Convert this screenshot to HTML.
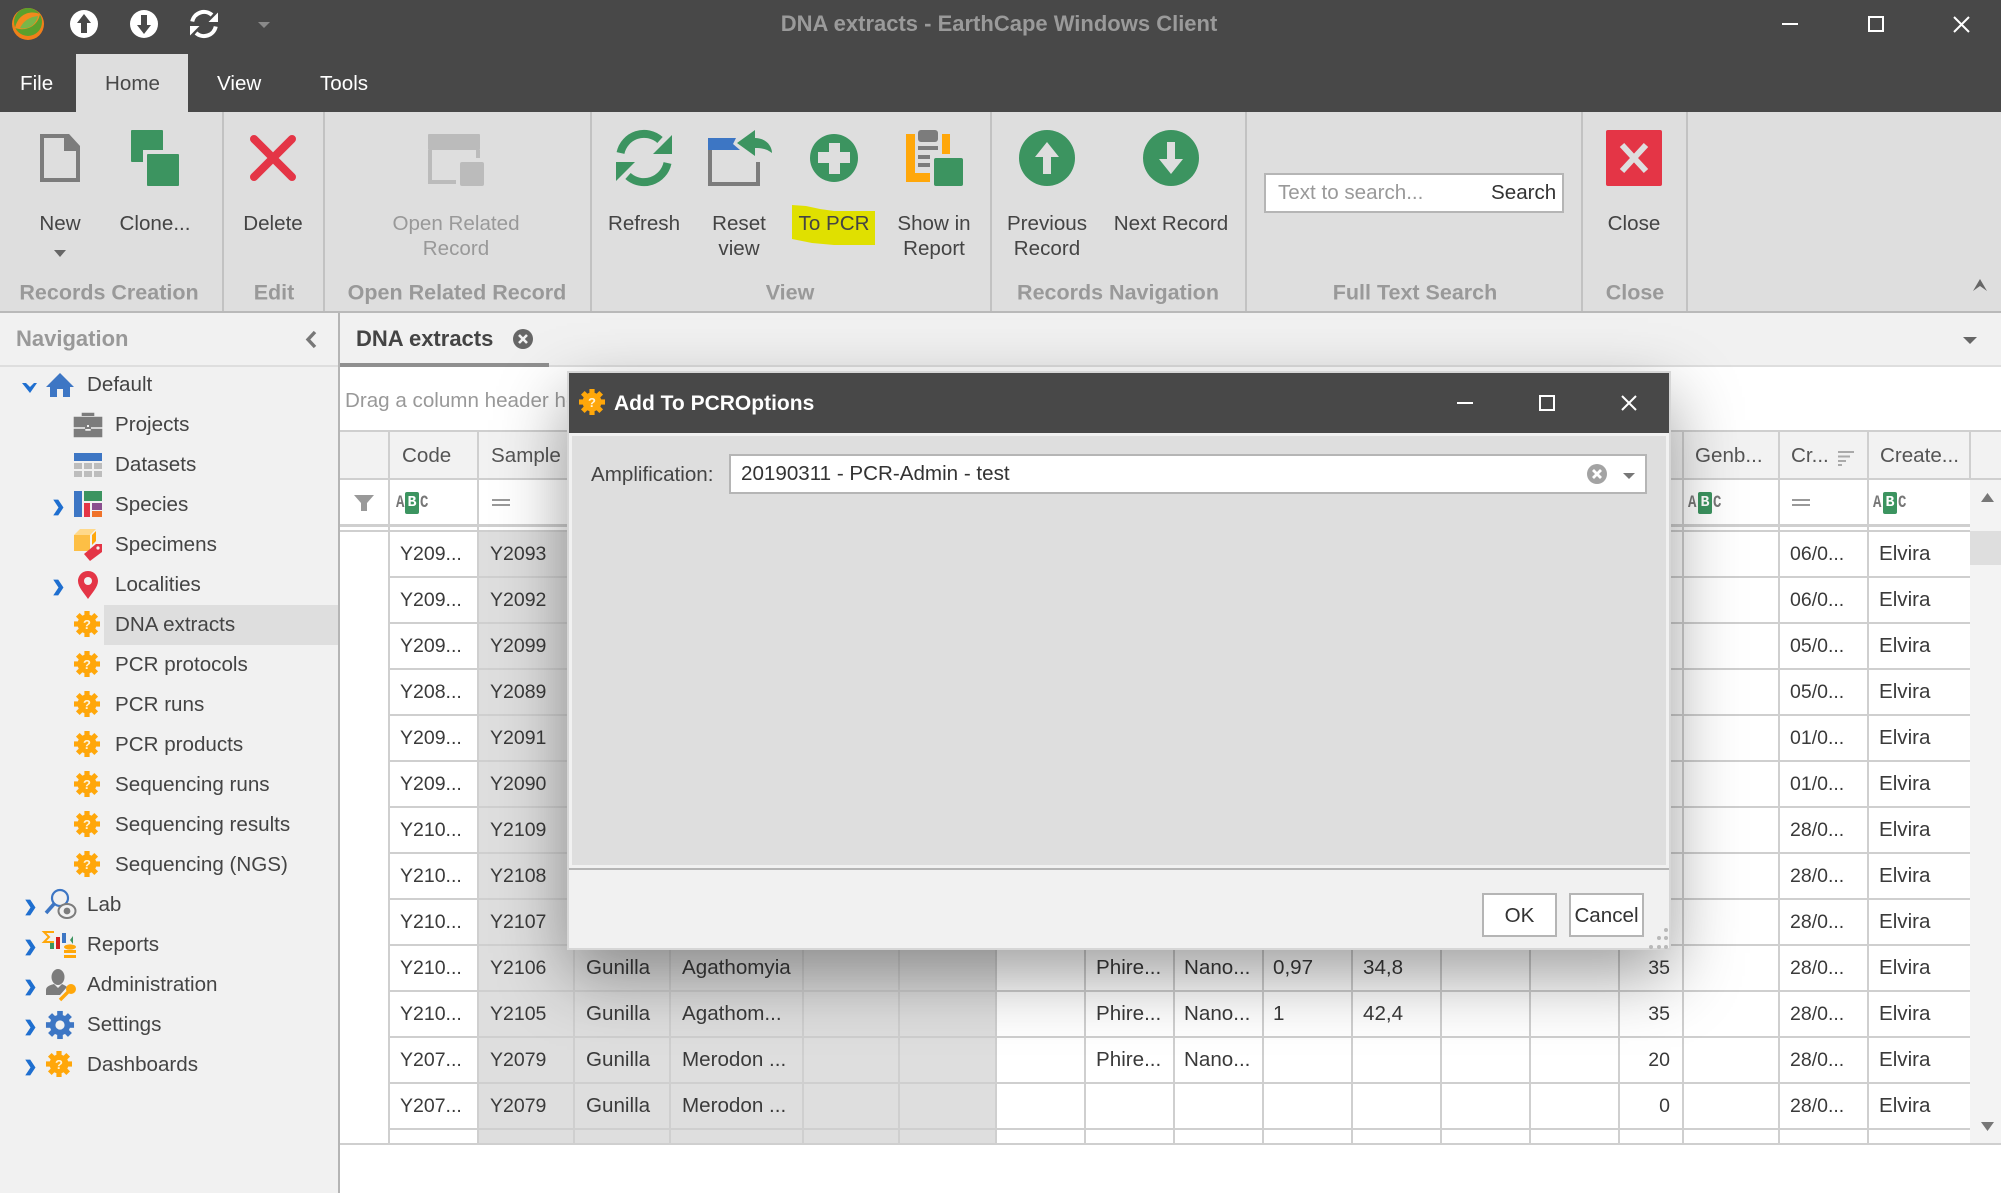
<!DOCTYPE html>
<html><head><meta charset="utf-8"><title>DNA extracts - EarthCape Windows Client</title>
<style>
html,body{margin:0;padding:0;background:#fff}
#p{position:relative;width:2001px;height:1193px;overflow:hidden;background:#fff;font:20.6px "Liberation Sans",sans-serif;color:#444}
#p div,#p span{position:absolute;white-space:nowrap}
.b{left:0;top:0}
.t{transform:translateY(calc(-50% + 1px))}
.c{transform:translate(-50%,calc(-50% + 1px));text-align:center}
.rb{color:#444}
.g{font-weight:bold;color:#999;font-size:21.5px;top:292px}
.sep{top:112px;height:199px;width:2px;background:#c2c2c2}
.v{top:432px;height:711px;width:2px;background:#cfcfcf}
.r{left:0;width:1970px;height:44px;line-height:44px}
.r span{color:#3a3a3a}
.a{left:400px;font-size:19.5px}.d2{left:490px;font-size:19.5px}.e2{left:586px}.f2{left:682px}
.k{left:1096px}.l{left:1184px}.m{left:1273px}.o{left:1363px}
.n{right:300px;font-size:19.5px}.q{left:1790px;font-size:19.5px}.s{left:1879px}
.abc{font:bold 14px "Liberation Mono",monospace;color:#777;top:492px;height:22px;line-height:22px;transform:scaleY(1.25)}
.abg{background:#3c9460;color:#fff;width:14px;height:22px;border-radius:2px;text-align:center;transform:none;font-size:15px}
.nv{color:#444}
svg{position:absolute;left:0;top:0}
</style></head><body><div id="p">

<!-- top dark band -->
<div class="b" style="width:2001px;height:112px;background:#484848"></div>
<div style="left:76px;top:54px;width:112px;height:58px;background:#dedede"></div>
<div class="t" style="left:999px;top:24px;transform:translate(-50%,-50%);font-weight:bold;font-size:22px;color:#9a9a9a">DNA extracts - EarthCape Windows Client</div>
<div class="t" style="left:20px;top:83px;color:#fff">File</div>
<div class="t" style="left:105px;top:83px;color:#484848">Home</div>
<div class="t" style="left:217px;top:83px;color:#fff">View</div>
<div class="t" style="left:320px;top:83px;color:#fff">Tools</div>

<!-- ribbon -->
<div style="left:0;top:112px;width:2001px;height:199px;background:#dedede"></div>
<div style="left:0;top:311px;width:2001px;height:2px;background:#b9b9b9"></div>
<div class="sep" style="left:222px"></div><div class="sep" style="left:323px"></div><div class="sep" style="left:590px"></div><div class="sep" style="left:990px"></div><div class="sep" style="left:1245px"></div><div class="sep" style="left:1581px"></div><div class="sep" style="left:1686px"></div>
<div style="left:792px;top:205px;width:83px;height:40px;background:#e0e000;clip-path:polygon(0 0,14px 1px,28px 4px,42px 6px,83px 6px,83px 40px,42px 40px,20px 38px,10px 36px,0 34px)"></div>

<div class="c rb" style="left:60px;top:223px">New</div>
<div class="c rb" style="left:155px;top:223px">Clone...</div>
<div class="c rb" style="left:273px;top:223px">Delete</div>
<div class="c" style="left:456px;top:235px;color:#999;line-height:25px;white-space:normal">Open Related<br>Record</div>
<div class="c rb" style="left:644px;top:223px">Refresh</div>
<div class="c rb" style="left:739px;top:235px;line-height:25px">Reset<br>view</div>
<div class="c rb" style="left:834px;top:223px">To PCR</div>
<div class="c rb" style="left:934px;top:235px;line-height:25px">Show in<br>Report</div>
<div class="c rb" style="left:1047px;top:235px;line-height:25px">Previous<br>Record</div>
<div class="c rb" style="left:1171px;top:223px">Next Record</div>
<div class="c rb" style="left:1634px;top:223px">Close</div>

<div class="c g" style="left:109px">Records Creation</div>
<div class="c g" style="left:274px">Edit</div>
<div class="c g" style="left:457px">Open Related Record</div>
<div class="c g" style="left:790px">View</div>
<div class="c g" style="left:1118px">Records Navigation</div>
<div class="c g" style="left:1415px">Full Text Search</div>
<div class="c g" style="left:1635px">Close</div>

<div style="left:1264px;top:173px;width:296px;height:36px;background:#fff;border:2px solid #b5b5b5"></div>
<div class="t" style="left:1278px;top:192px;color:#999">Text to search...</div>
<div class="t" style="left:1491px;top:192px;color:#333">Search</div>

<!-- navigation -->
<div style="left:0;top:313px;width:338px;height:880px;background:#f1f1f1"></div>
<div style="left:338px;top:313px;width:2px;height:880px;background:#b5b5b5"></div>
<div style="left:0;top:365px;width:338px;height:2px;background:#dedede"></div>
<div class="t" style="left:16px;top:338px;font-weight:bold;font-size:22px;color:#999">Navigation</div>
<div style="left:104px;top:605px;width:234px;height:40px;background:#dedede"></div>
<div class="t nv" style="left:87px;top:384px">Default</div>
<div class="t nv" style="left:115px;top:424px">Projects</div>
<div class="t nv" style="left:115px;top:464px">Datasets</div>
<div class="t nv" style="left:115px;top:504px">Species</div>
<div class="t nv" style="left:115px;top:544px">Specimens</div>
<div class="t nv" style="left:115px;top:584px">Localities</div>
<div class="t nv" style="left:115px;top:624px">DNA extracts</div>
<div class="t nv" style="left:115px;top:664px">PCR protocols</div>
<div class="t nv" style="left:115px;top:704px">PCR runs</div>
<div class="t nv" style="left:115px;top:744px">PCR products</div>
<div class="t nv" style="left:115px;top:784px">Sequencing runs</div>
<div class="t nv" style="left:115px;top:824px">Sequencing results</div>
<div class="t nv" style="left:115px;top:864px">Sequencing (NGS)</div>
<div class="t nv" style="left:87px;top:904px">Lab</div>
<div class="t nv" style="left:87px;top:944px">Reports</div>
<div class="t nv" style="left:87px;top:984px">Administration</div>
<div class="t nv" style="left:87px;top:1024px">Settings</div>
<div class="t nv" style="left:87px;top:1064px">Dashboards</div>

<!-- tab strip -->
<div style="left:340px;top:313px;width:1661px;height:52px;background:#f1f1f1"></div>
<div style="left:340px;top:365px;width:1661px;height:2px;background:#dedede"></div>
<div style="left:340px;top:363px;width:209px;height:4px;background:#8f8f8f"></div>
<div class="t" style="left:356px;top:338px;font-weight:bold;font-size:22px;color:#444">DNA extracts</div>
<div class="t" style="left:345px;top:400px;color:#999">Drag a column header here to group by that column</div>

<!-- grid -->
<div style="left:340px;top:430px;width:1661px;height:2px;background:#cfcfcf"></div>
<div style="left:340px;top:432px;width:1661px;height:46px;background:#f2f2f2"></div>
<div style="left:340px;top:478px;width:1661px;height:2px;background:#cfcfcf"></div>
<div style="left:340px;top:524px;width:1630px;height:3px;background:#cfcfcf"></div>
<div style="left:340px;top:530px;width:1630px;height:2px;background:#cfcfcf"></div>
<div style="left:477px;top:532px;width:519px;height:611px;background:#dedede"></div>
<div style="left:388px;top:532px;width:1582px;height:611px;background:repeating-linear-gradient(to bottom,transparent 0,transparent 44px,#cfcfcf 44px,#cfcfcf 46px)"></div>
<div style="left:1970px;top:480px;width:31px;height:663px;background:#f3f3f3"></div>
<div style="left:1970px;top:531px;width:31px;height:34px;background:#dedede"></div>
<div style="left:340px;top:1143px;width:1661px;height:2px;background:#cfcfcf"></div>

<div class="v" style="left:388px"></div><div class="v" style="left:477px"></div><div class="v" style="left:573px"></div><div class="v" style="left:669px"></div><div class="v" style="left:802px"></div><div class="v" style="left:898px"></div><div class="v" style="left:995px"></div><div class="v" style="left:1084px"></div><div class="v" style="left:1173px"></div><div class="v" style="left:1262px"></div><div class="v" style="left:1351px"></div><div class="v" style="left:1440px"></div><div class="v" style="left:1529px"></div><div class="v" style="left:1618px"></div><div class="v" style="left:1682px"></div><div class="v" style="left:1778px"></div><div class="v" style="left:1867px"></div>
<div style="left:1969px;top:432px;width:2px;height:48px;background:#cfcfcf"></div>

<div class="t" style="left:402px;top:455px;color:#555">Code</div>
<div class="t" style="left:491px;top:455px;color:#555">Sample</div>
<div class="t" style="left:1695px;top:455px;color:#555">Genb...</div>
<div class="t" style="left:1791px;top:455px;color:#555">Cr...</div>
<div class="t" style="left:1880px;top:455px;color:#555">Create...</div>

<span class="abc" style="left:396px">A</span><span class="abc abg" style="left:405px">B</span><span class="abc" style="left:420px">C</span>
<span class="abc" style="left:1688px">A</span><span class="abc abg" style="left:1698px">B</span><span class="abc" style="left:1713px">C</span>
<span class="abc" style="left:1873px">A</span><span class="abc abg" style="left:1883px">B</span><span class="abc" style="left:1898px">C</span>
<div style="left:492px;top:499px;width:18px;height:2px;background:#999"></div><div style="left:492px;top:504px;width:18px;height:2px;background:#999"></div>
<div style="left:1792px;top:499px;width:18px;height:2px;background:#999"></div><div style="left:1792px;top:504px;width:18px;height:2px;background:#999"></div>

<div class="r" style="top:532px"><span class="a">Y209...</span><span class="d2">Y2093</span><span class="n">0</span><span class="q">06/0...</span><span class="s">Elvira</span></div>
<div class="r" style="top:578px"><span class="a">Y209...</span><span class="d2">Y2092</span><span class="n">0</span><span class="q">06/0...</span><span class="s">Elvira</span></div>
<div class="r" style="top:624px"><span class="a">Y209...</span><span class="d2">Y2099</span><span class="n">0</span><span class="q">05/0...</span><span class="s">Elvira</span></div>
<div class="r" style="top:670px"><span class="a">Y208...</span><span class="d2">Y2089</span><span class="n">0</span><span class="q">05/0...</span><span class="s">Elvira</span></div>
<div class="r" style="top:716px"><span class="a">Y209...</span><span class="d2">Y2091</span><span class="n">0</span><span class="q">01/0...</span><span class="s">Elvira</span></div>
<div class="r" style="top:762px"><span class="a">Y209...</span><span class="d2">Y2090</span><span class="n">0</span><span class="q">01/0...</span><span class="s">Elvira</span></div>
<div class="r" style="top:808px"><span class="a">Y210...</span><span class="d2">Y2109</span><span class="n">0</span><span class="q">28/0...</span><span class="s">Elvira</span></div>
<div class="r" style="top:854px"><span class="a">Y210...</span><span class="d2">Y2108</span><span class="n">0</span><span class="q">28/0...</span><span class="s">Elvira</span></div>
<div class="r" style="top:900px"><span class="a">Y210...</span><span class="d2">Y2107</span><span class="n">35</span><span class="q">28/0...</span><span class="s">Elvira</span></div>
<div class="r" style="top:946px"><span class="a">Y210...</span><span class="d2">Y2106</span><span class="e2">Gunilla</span><span class="f2">Agathomyia</span><span class="k">Phire...</span><span class="l">Nano...</span><span class="m">0,97</span><span class="o">34,8</span><span class="n">35</span><span class="q">28/0...</span><span class="s">Elvira</span></div>
<div class="r" style="top:992px"><span class="a">Y210...</span><span class="d2">Y2105</span><span class="e2">Gunilla</span><span class="f2">Agathom...</span><span class="k">Phire...</span><span class="l">Nano...</span><span class="m">1</span><span class="o">42,4</span><span class="n">35</span><span class="q">28/0...</span><span class="s">Elvira</span></div>
<div class="r" style="top:1038px"><span class="a">Y207...</span><span class="d2">Y2079</span><span class="e2">Gunilla</span><span class="f2">Merodon ...</span><span class="k">Phire...</span><span class="l">Nano...</span><span class="n">20</span><span class="q">28/0...</span><span class="s">Elvira</span></div>
<div class="r" style="top:1084px"><span class="a">Y207...</span><span class="d2">Y2079</span><span class="e2">Gunilla</span><span class="f2">Merodon ...</span><span class="n">0</span><span class="q">28/0...</span><span class="s">Elvira</span></div>

<!-- base icons -->
<svg width="2001" height="1193" viewBox="0 0 2001 1193">
<defs>
<g id="gear"><circle r="9.5"/><g id="tt"><rect x="-2.6" y="-13" width="5.2" height="26"/><rect x="-2.6" y="-13" width="5.2" height="26" transform="rotate(45)"/><rect x="-2.6" y="-13" width="5.2" height="26" transform="rotate(90)"/><rect x="-2.6" y="-13" width="5.2" height="26" transform="rotate(135)"/></g></g>
<g id="og"><use href="#gear" fill="#ffa70a"/><text x="0" y="5" font-family="Liberation Sans" font-weight="bold" font-size="13" text-anchor="middle" fill="#fff3d8">?</text></g>
<path id="cr" d="M0 0 H4 L9 7.5 L4 15 H0 L5 7.5 Z" fill="#1f6fd0" stroke="#1f6fd0" stroke-width=".8"/>
<g id="ref"><path d="M-23.5 -5 A24 24 0 0 1 16 -18" fill="none" stroke-width="8"/><path d="M28 -23 V-4 H9 Z" stroke="none"/><path d="M23.5 5 A24 24 0 0 1 -16 18" fill="none" stroke-width="8"/><path d="M-28 23 V4 H-9 Z" stroke="none"/></g>
</defs>

<!-- title bar icons -->
<circle cx="28" cy="24" r="16" fill="#f07f1a"/><circle cx="28" cy="22" r="14" fill="#5aa02c"/>
<path d="M15 28 C18 14 30 10 40 14 C38 26 26 32 15 28 Z" fill="#f28a1e"/><path d="M20 28 C24 20 30 17 38 16 C36 25 28 30 20 28 Z" fill="#7ab648"/>
<circle cx="84" cy="24" r="14" fill="#fff"/><path d="M84 14 L91 23 H87 V33 H81 V23 H77 Z" fill="#484848"/>
<circle cx="144" cy="24" r="14" fill="#fff"/><path d="M144 34 L137 25 H141 V15 H147 V25 H151 Z" fill="#484848"/>
<use href="#ref" transform="translate(204 24) scale(.5)" fill="#fff" stroke="#fff"/>
<path d="M258 22 H270 L264 28 Z" fill="#8a8a8a"/>
<path d="M1782 24 H1798" stroke="#fff" stroke-width="2"/>
<rect x="1869" y="17" width="14" height="14" fill="none" stroke="#fff" stroke-width="2"/>
<path d="M1954 17 L1969 32 M1969 17 L1954 32" stroke="#fff" stroke-width="2"/>

<!-- ribbon icons -->
<path d="M42 136 H68 L78 147 V180 H42 Z" fill="none" stroke="#7c7c7c" stroke-width="4"/><path d="M64 134 H69 L80 146 V151 H64 Z" fill="#7c7c7c"/>
<path d="M54 250 H66 L60 257 Z" fill="#666"/>
<rect x="131" y="130" width="32" height="32" rx="1" fill="#3c9460"/><rect x="143" y="150" width="36" height="36" fill="#dedede"/><rect x="147" y="154" width="32" height="32" rx="1" fill="#3c9460"/>
<path d="M254 139 L292 177 M292 139 L254 177" stroke="#e43546" stroke-width="8" stroke-linecap="round"/>
<rect x="428" y="134" width="52" height="16" rx="1" fill="#bbb"/><path d="M430 150 V182 H456 M478 150 V158" fill="none" stroke="#bbb" stroke-width="4"/><rect x="460" y="162" width="24" height="24" rx="2" fill="#bbb"/>
<use href="#ref" transform="translate(644 158)" fill="#3c9460" stroke="#3c9460"/>
<path d="M710 150 V184 H758 V162" fill="none" stroke="#7c7c7c" stroke-width="4"/><path d="M708 138 H736 L733 144 L740 150 H708 Z" fill="#3d76c4"/>
<path d="M737 143 L755 130 V138 C766 138 772 146 772 153 C767 149 762 148 755 148 V156 Z" fill="#3c9460"/>
<circle cx="834" cy="158" r="24" fill="#3c9460"/><path d="M829 143 H840 V152 H850 V163 H840 V174 H829 V163 H818 V152 H829 Z" fill="#dedede"/>
<path d="M906 134 H915 V173 H930 V182 H906 Z M942 134 H950 V154 H942 Z" fill="#ffa70a"/>
<rect x="918" y="130" width="20" height="12" rx="3" fill="#7c7c7c"/><path d="M918 148 H938 M918 157 H930 M918 165 H930" stroke="#7c7c7c" stroke-width="4"/>
<rect x="934" y="158" width="29" height="28" rx="2" fill="#3c9460"/>
<circle cx="1047" cy="158" r="28" fill="#3c9460"/><path d="M1047 142 L1059 157 H1051 V174 H1043 V157 H1035 Z" fill="#dedede"/>
<circle cx="1171" cy="158" r="28" fill="#3c9460"/><path d="M1171 174 L1183 159 H1175 V142 H1167 V159 H1159 Z" fill="#dedede"/>
<rect x="1606" y="130" width="56" height="56" rx="2" fill="#e43546"/><path d="M1622 145 L1646 171 M1646 145 L1622 171" stroke="#dedede" stroke-width="6"/>
<path d="M1973 291 L1980 279 L1987 291 L1980 286 Z" fill="#666"/>

<!-- nav header / tab -->
<path d="M315 332 L308 339.5 L315 347" fill="none" stroke="#777" stroke-width="3.4"/>
<circle cx="523" cy="339" r="10" fill="#666"/><path d="M519 335 L527 343 M527 335 L519 343" stroke="#f1f1f1" stroke-width="2.6"/>
<path d="M1963 337 H1977 L1970 344 Z" fill="#666"/>

<!-- tree icons -->
<path d="M22 383 H26 L30 387 L34 383 H37 L30 393 Z" fill="#1f6fd0"/>
<path d="M60 373 L74 387 H70 V397 H63 V389 H57 V397 H50 V387 H46 Z" fill="#3d76c4"/>
<path d="M82 416 V413 H94 V416 M74 417 H102 V427 H91 V424 H85 V427 H74 Z M74 429 H85 V431 H91 V429 H102 V437 H74 Z" fill="#7c7c7c" stroke="#7c7c7c" stroke-width=".6"/><rect x="85" y="423" width="6" height="6" fill="#7c7c7c"/><rect x="87" y="425" width="2" height="2" fill="#f1f1f1"/>
<rect x="74" y="453" width="28" height="8" fill="#3d76c4"/>
<g fill="#bdbdbd"><rect x="74" y="463" width="8" height="6"/><rect x="84" y="463" width="8" height="6"/><rect x="94" y="463" width="8" height="6"/><rect x="74" y="471" width="8" height="6"/><rect x="84" y="471" width="8" height="6"/><rect x="94" y="471" width="8" height="6"/></g>
<use href="#cr" x="54" y="500"/>
<rect x="74" y="491" width="8" height="26" fill="#3d76c4"/><rect x="84" y="491" width="18" height="10" fill="#3c9460"/><rect x="84" y="503" width="6" height="14" fill="#e43546"/><rect x="92" y="503" width="10" height="7" fill="#8a4f8f"/><rect x="92" y="511" width="10" height="6" fill="#f0732a"/>
<path d="M74 535 L80 529 H96 L90 535 Z" fill="#ffd98a"/><rect x="74" y="535" width="16" height="16" fill="#fdbf45"/><path d="M92 535 L96 531 V541 L92 545 Z" fill="#ffa70a"/>
<path d="M84 554 L96 544 H102 V552 L90 561 Z" fill="#e43546"/><circle cx="98" cy="548" r="1.6" fill="#f1f1f1"/>
<use href="#cr" x="54" y="580"/>
<path d="M88 571 C81 571 78 577 78 581 C78 587 84 593 88 599 C92 593 98 587 98 581 C98 577 95 571 88 571 Z" fill="#e43546"/><circle cx="88" cy="581" r="4" fill="#f1f1f1"/>
<use href="#og" transform="translate(87 624)"/><use href="#og" transform="translate(87 664)"/><use href="#og" transform="translate(87 704)"/><use href="#og" transform="translate(87 744)"/><use href="#og" transform="translate(87 784)"/><use href="#og" transform="translate(87 824)"/><use href="#og" transform="translate(87 864)"/>
<use href="#cr" x="26" y="900"/><use href="#cr" x="26" y="940"/><use href="#cr" x="26" y="980"/><use href="#cr" x="26" y="1020"/><use href="#cr" x="26" y="1060"/>
<circle cx="60" cy="898" r="8" fill="none" stroke="#3d76c4" stroke-width="2.2"/><path d="M54 904 L46 913" stroke="#3d76c4" stroke-width="3.6"/>
<ellipse cx="67" cy="911" rx="8.5" ry="7" fill="#f1f1f1" stroke="#7c7c7c" stroke-width="2"/><circle cx="67" cy="911" r="3.4" fill="#7c7c7c"/>
<path d="M54 932 H44 L49 937 L44 942 H54" fill="none" stroke="#ffa70a" stroke-width="2"/><rect x="50" y="943" width="4" height="6" fill="#3c9460"/><rect x="56" y="937" width="4" height="12" fill="#d32020"/><rect x="62" y="933" width="4" height="10" fill="#3d76c4"/>
<path d="M70 940 L73 936 V944 Z" fill="#3c9460"/><ellipse cx="70" cy="947" rx="6" ry="2.6" fill="#ffa70a"/><rect x="64" y="950" width="12" height="3" fill="#ffa70a"/><rect x="64" y="955" width="12" height="3" fill="#ffa70a"/>
<ellipse cx="58" cy="977" rx="6.5" ry="8" fill="#7c7c7c"/><path d="M46 995 V990 C46 986 51 985 54 984 L58 988 L62 984 C64 985 66 986 67 987 L60 995 Z" fill="#7c7c7c"/>
<circle cx="71" cy="989" r="5" fill="#ffa70a"/><path d="M68 992 L60 1000" stroke="#ffa70a" stroke-width="3.4"/>
<use href="#gear" transform="translate(60 1025) scale(1.08)" fill="#3d76c4"/><circle cx="60" cy="1025" r="4.6" fill="#f1f1f1"/>
<use href="#og" transform="translate(59 1064)"/>

<!-- grid icons -->
<path d="M354 495 H374 L367 503 V511 H361 V503 Z" fill="#999"/>
<path d="M1838 452 H1854 M1838 456.5 H1850 M1838 461 H1846 M1838 465 H1842" stroke="#aaa" stroke-width="2"/>
<path d="M1981 502 L1987.5 493 L1994 502 Z" fill="#777"/>
<path d="M1981 1122 H1994 L1987.5 1131 Z" fill="#777"/>
</svg>

<!-- dialog -->
<div style="left:567px;top:371px;width:1100px;height:575px;background:#f1f1f1;border:2px solid #d6d6d6;box-sizing:content-box;box-shadow:0 26px 65px rgba(0,0,0,.38)"></div>
<div style="left:569px;top:373px;width:1100px;height:60px;background:#484848"></div>
<div style="left:572px;top:436px;width:1094px;height:429px;background:#dedede"></div>
<div style="left:569px;top:868px;width:1100px;height:2px;background:#b5b5b5"></div>
<div class="t" style="left:614px;top:403px;font-weight:bold;font-size:21px;color:#fff">Add To PCROptions</div>
<div class="t" style="left:591px;top:474px;color:#444">Amplification:</div>
<div style="left:729px;top:454px;width:914px;height:36px;background:#fff;border:2px solid #b5b5b5"></div>
<div class="t" style="left:741px;top:473px;color:#333">20190311 - PCR-Admin - test</div>
<div style="left:1482px;top:893px;width:71px;height:40px;background:#fff;border:2px solid #b5b5b5;text-align:center;line-height:42px;color:#333">OK</div>
<div style="left:1569px;top:893px;width:71px;height:40px;background:#fff;border:2px solid #b5b5b5;text-align:center;line-height:42px;color:#333">Cancel</div>
<svg width="2001" height="1193" viewBox="0 0 2001 1193">
<use href="#og" transform="translate(592 402)"/>
<path d="M1457 403 H1473" stroke="#fff" stroke-width="2"/>
<rect x="1540" y="396" width="14" height="14" fill="none" stroke="#fff" stroke-width="2"/>
<path d="M1622 396 L1636 410 M1636 396 L1622 410" stroke="#fff" stroke-width="2"/>
<circle cx="1597" cy="474" r="10" fill="#a3a3a3"/><path d="M1593 470 L1601 478 M1601 470 L1593 478" stroke="#fff" stroke-width="2.8"/>
<path d="M1623 473 H1635 L1629 479 Z" fill="#777"/>
<g fill="#b9b9b9"><circle cx="1666" cy="930" r="2"/><circle cx="1659" cy="938" r="2"/><circle cx="1666" cy="938" r="2"/><circle cx="1651" cy="947" r="2"/><circle cx="1659" cy="947" r="2"/><circle cx="1666" cy="947" r="2"/></g>
</svg>

</div></body></html>
